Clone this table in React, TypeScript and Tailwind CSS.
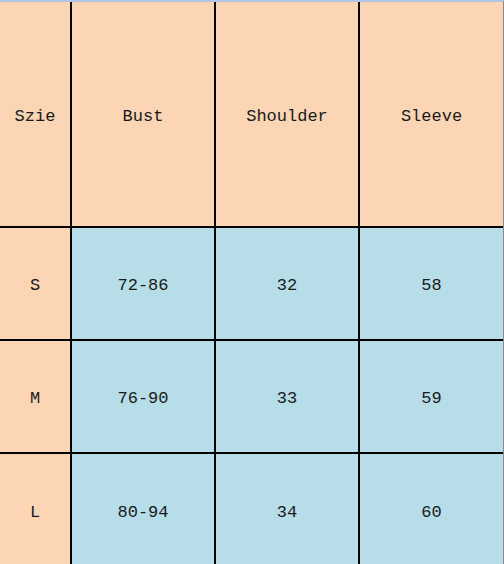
const header = ["Szie", "Bust", "Shoulder", "Sleeve"];

const rows = [
  ["S", "72-86", "32", "58"],
  ["M", "76-90", "33", "59"],
  ["L", "80-94", "34", "60"],
];

const App = () => {
  return (
    <div
      className="w-[504px] h-[564px] overflow-hidden bg-[#fcd5b4] text-[#1a1a1a] border-t-2 border-[#b3c5e3] border-r border-r-[#8a8a8a]"
      style={{ fontFamily: '"Liberation Mono", "DejaVu Sans Mono", monospace' }}
    >
      {/* Header row */}
      <div className="grid grid-cols-[72px_144px_144px_143px] h-[226px] border-b-2 border-black text-[17px]">
        {header.map((h, i) => (
          <div
            key={h}
            className={`flex items-center justify-center pt-[6px] ${i < 3 ? "border-r-2 border-black" : ""}`}
          >
            {h}
          </div>
        ))}
      </div>

      {/* Size rows */}
      {rows.map((row, r) => (
        <div
          key={row[0]}
          className={`grid grid-cols-[72px_144px_144px_143px] h-[113px] text-[17px] ${r < 2 ? "border-b-2 border-black" : ""}`}
        >
          {row.map((cell, i) => (
            <div
              key={i}
              className={`flex items-center justify-center pt-[4px] ${i === 0 ? "bg-[#fcd5b4]" : "bg-[#b6dde8]"} ${i < 3 ? "border-r-2 border-black" : ""}`}
            >
              {cell}
            </div>
          ))}
        </div>
      ))}
    </div>
  );
};

export default App;
